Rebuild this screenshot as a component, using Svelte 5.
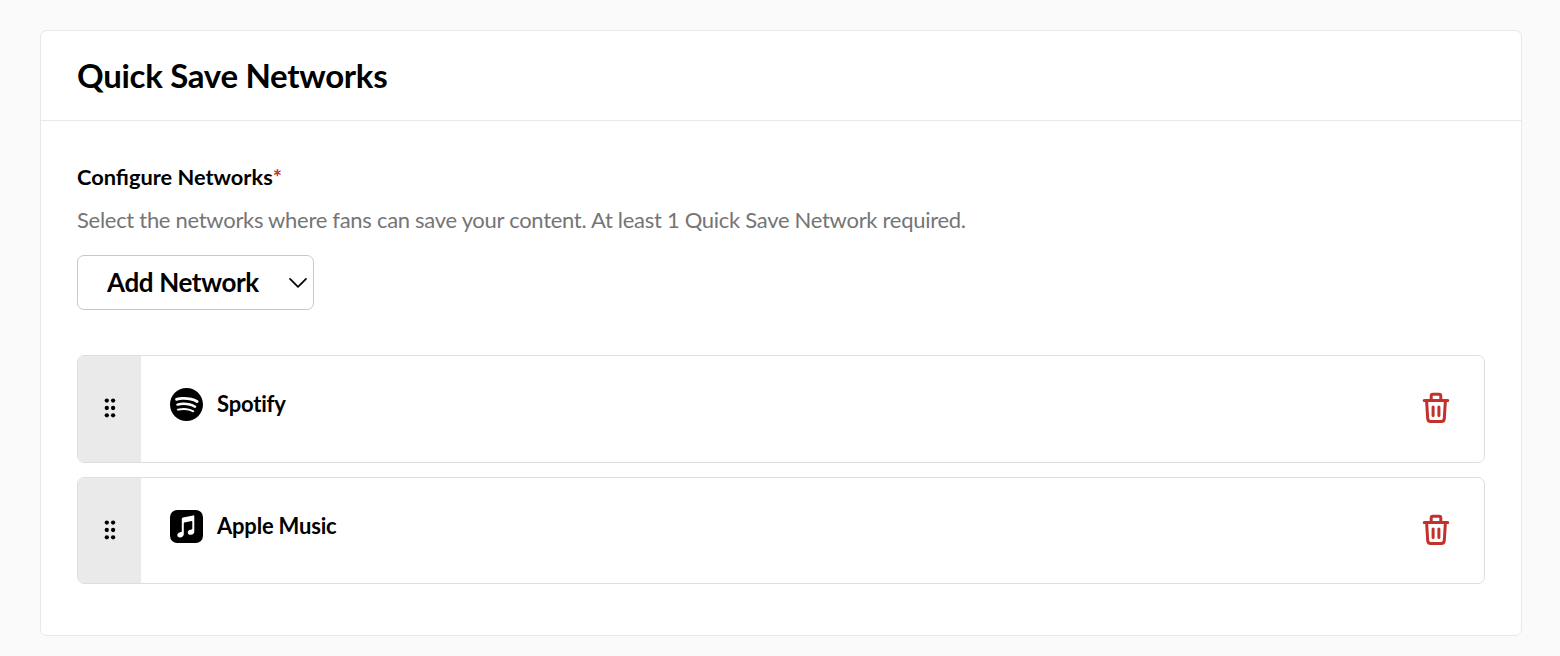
<script lang="ts">
  type Network = { id: string; name: string }

  let networks: Network[] = $state([
    { id: 'spotify', name: 'Spotify' },
    { id: 'apple', name: 'Apple Music' },
  ])

  function remove(id: string) {
    networks = networks.filter((n) => n.id !== id)
  }
</script>

<section class="panel">
  <header class="panel__header">
    <h2 class="panel__title">Quick Save Networks</h2>
  </header>

  <div class="panel__body">
    <div class="label">Configure Networks<span class="label__required">*</span></div>
    <p class="help">Select the networks where fans can save your content. At least 1 Quick Save Network required.</p>

    <button class="add" type="button">
      <span class="add__text">Add Network</span>
      <svg class="add__chevron" width="20" height="12" viewBox="0 0 20 12" fill="none" stroke="currentColor" stroke-width="1.7" stroke-linecap="round" stroke-linejoin="round">
        <path d="M2 1.8l8 8 8-8"></path>
      </svg>
    </button>

    <ul class="list">
      {#each networks as network (network.id)}
        <li class="row">
          <div class="row__handle">
            <svg width="12" height="20" viewBox="0 0 12 20" fill="currentColor">
              {#each [2.6, 10, 17.3] as cy}
                <circle cx="2.8" {cy} r="2.15"></circle>
                <circle cx="9.1" {cy} r="2.15"></circle>
              {/each}
            </svg>
          </div>

          <div class="row__main">
            {#if network.id === 'spotify'}
              <svg width="33" height="33" viewBox="0 0 24 24" fill="currentColor">
                <path d="M12 0C5.4 0 0 5.4 0 12s5.4 12 12 12 12-5.4 12-12S18.66 0 12 0zm5.521 17.34c-.24.359-.66.48-1.021.24-2.82-1.74-6.36-2.101-10.561-1.141-.418.122-.779-.179-.899-.539-.12-.421.18-.78.54-.9 4.56-1.021 8.52-.6 11.64 1.32.42.18.479.659.301 1.02zm1.44-3.3c-.301.42-.841.6-1.262.3-3.239-1.98-8.159-2.58-11.939-1.38-.479.12-1.02-.12-1.14-.6-.12-.48.12-1.021.6-1.141C9.6 9.9 15 10.561 18.72 12.84c.361.181.54.78.241 1.2zm.12-3.36C15.24 8.4 8.82 8.16 5.16 9.301c-.6.179-1.2-.181-1.38-.721-.18-.601.18-1.2.72-1.381 4.26-1.26 11.28-1.02 15.721 1.621.539.3.719 1.02.419 1.56-.299.421-1.02.599-1.559.3z"></path>
              </svg>
            {:else}
              <svg width="33" height="33" viewBox="0 0 33 33">
                <rect width="33" height="33" rx="7.2" fill="currentColor"></rect>
                <path d="M13 7.6L23.2 5.4q1.1-.2 1.1.8v15c0 2.1-1.2 3.3-3.2 3.6-2 .3-3.3-.8-3.3-2.4 0-1.4 1-2.3 2.5-2.6l1.2-.3c.6-.1.8-.4.8-1v-6.9q0-.7-.7-.6l-7.2 1.5q-.6.1-.6.8v10.5c0 2.1-1.3 3.4-3.2 3.7-2 .3-3.3-.8-3.3-2.5 0-1.3.9-2.3 2.4-2.6l1.2-.3c.7-.1.9-.5.9-1.1V8.8q0-1 1.2-1.2z" fill="#fff"></path>
              </svg>
            {/if}
            <span class="row__name">{network.name}</span>
          </div>

          <button class="row__remove" type="button" aria-label="Remove {network.name}" onclick={() => remove(network.id)}>
            <svg width="28" height="32" viewBox="0 0 28 32" fill="none" stroke="currentColor" stroke-width="3" stroke-linecap="round" stroke-linejoin="round">
              <path d="M2.2 8.5h23.6M9.2 8V4Q9.2 2.2 11 2.2h6Q18.8 2.2 18.8 4V8M4.6 8.7l1.1 18q.2 2.8 3 2.8h10.6q2.8 0 3-2.8L23.4 8.7"></path>
              <path d="M11.1 15v8.5M16.9 15v8.5"></path>
            </svg>
          </button>
        </li>
      {/each}
    </ul>
  </div>
</section>

<style>
  :global(body) {
    background: #fafafa;
  }

  .panel {
    box-sizing: border-box;
    height: 606px;
    margin: 30px 38px 0 40px;
    background: #fff;
    border: 1px solid #e8e8e8;
    border-radius: 7px;
    color: #000;
    font-family: Lato, sans-serif;
  }

  .panel__header {
    display: flex;
    align-items: center;
    box-sizing: border-box;
    height: 90px;
    padding: 0 36px 2px;
    border-bottom: 1px solid #e8e8e8;
  }

  .panel__title {
    margin: 0;
    font-size: 33px;
    line-height: 40px;
    font-weight: 700;
    letter-spacing: -0.3px;
  }

  .panel__body {
    padding: 42px 36px 0;
  }

  .label {
    font-size: 21.8px;
    line-height: 28px;
    font-weight: 700;
  }

  .label__required {
    color: #c4302b;
  }

  .help {
    margin: 15px 0 21px;
    font-size: 22px;
    line-height: 28px;
    letter-spacing: -0.29px;
    color: #757575;
  }

  .add {
    display: flex;
    align-items: center;
    justify-content: space-between;
    box-sizing: border-box;
    width: 237px;
    height: 55px;
    padding: 0 5px 0 29px;
    background: #fff;
    border: 1px solid #c8c8c8;
    border-radius: 7px;
    color: inherit;
    font: 700 26px/32px Lato, sans-serif;
    letter-spacing: -0.36px;
    cursor: pointer;
  }

  .add__text {
    padding-bottom: 2px;
  }

  /* ── Network list ── */
  .list {
    display: flex;
    flex-direction: column;
    gap: 14px;
    margin: 45px 0 0;
    padding: 0;
    list-style: none;
  }

  .row {
    display: flex;
    box-sizing: border-box;
    height: 108px;
    border: 1px solid #dedede;
    border-radius: 7px;
    overflow: hidden;
  }

  .row:last-child {
    height: 107px;
  }

  .row__handle {
    display: flex;
    align-items: center;
    justify-content: center;
    width: 63px;
    padding-bottom: 2px;
    background: #eaeaea;
    cursor: grab;
  }

  .row__main {
    display: flex;
    flex: 1;
    align-items: center;
    align-self: flex-start;
    gap: 14px;
    padding: 32px 0 0 29px;
  }

  .row__name {
    padding-bottom: 2px;
    font-size: 22px;
    line-height: 28px;
    font-weight: 700;
    letter-spacing: -0.2px;
  }

  .row__remove {
    display: flex;
    align-items: center;
    padding: 0 34px 2px 0;
    background: none;
    border: 0;
    color: #c4302b;
    cursor: pointer;
  }
</style>
